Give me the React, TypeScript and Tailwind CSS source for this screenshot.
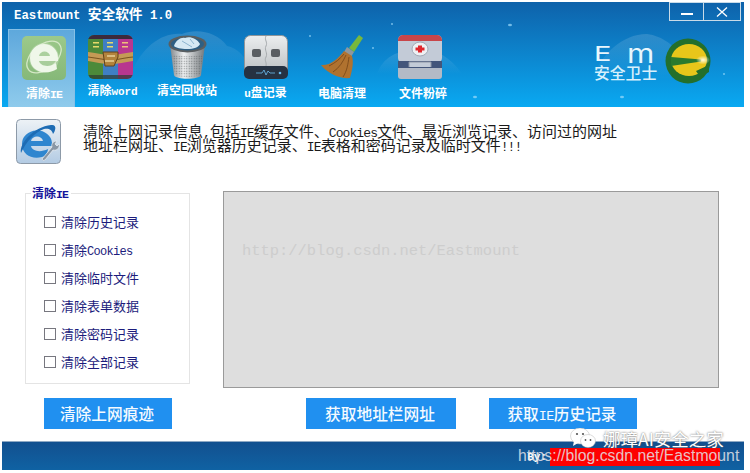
import type { ReactNode } from "react";

// half-width latin runs, the CJK font sets the full-width size around them
function L({ children, className }: { children: ReactNode; className: string }) {
  return <span className={`font-['Liberation_Mono',monospace] leading-[0] ${className}`}>{children}</span>;
}

function IeGreenIcon() {
  return (
    <svg width="44" height="44" viewBox="0 0 44 44">
      <defs>
        <linearGradient id="ieGreen" x1="0" y1="0" x2="0" y2="1">
          <stop offset="0" stopColor="#9cc98a" />
          <stop offset="1" stopColor="#86b878" />
        </linearGradient>
      </defs>
      <rect width="44" height="44" rx="5" fill="url(#ieGreen)" />
      <ellipse cx="22" cy="21" rx="20" ry="12" fill="none" stroke="#d4e8c6" strokeWidth="1.300" transform="rotate(-40 22 21)" />
      <circle cx="22" cy="22" r="15" fill="#d9ecd0" opacity="0.35" />
      <path
        d="M8 22a14 14 0 0 1 28 0v3H17c1 5 10 7 17 2l1 6c-11 7-27 3-27-11zm9-2h11c-1-6-10-6-11 0z"
        fill="#eff7e9"
      />
    </svg>
  );
}

function RarIcon() {
  return (
    <svg width="45" height="44" viewBox="0 0 45 44">
      <clipPath id="rarClip">
        <rect width="45" height="44" rx="6" />
      </clipPath>
      <g clipPath="url(#rarClip)">
        <rect x="0" width="15" height="44" fill="#4c8a3a" />
        <rect x="15" width="15" height="44" fill="#3f7fc4" />
        <rect x="30" width="15" height="44" fill="#b8368f" />
        <rect width="45" height="4" fill="#3c2a3c" />
        <rect y="40" width="45" height="4" fill="#2c3a30" opacity="0.7" />
        <path d="M0 17c10 1 16 3 22 3s14-2 23-3v9c-8 1-15 3-23 3S8 27 0 26z" fill="#c49a55" />
        <path d="M0 22c10 1 16 3 22 3s14-2 23-3" fill="none" stroke="#7a5522" strokeWidth="1.200" />
        <path d="M15 17h15v5l-4 9H17z" fill="#b2833c" stroke="#63431a" strokeWidth="1" />
        <path d="M19 21h8M17 26h9" stroke="#e8cf95" strokeWidth="1.500" />
      </g>
      <rect x="5" y="7" width="6" height="1.500" fill="#e8da6a" />
      <rect x="5" y="11" width="6" height="1.500" fill="#e8da6a" />
      <rect x="19" y="7" width="6" height="1.500" fill="#e8da6a" />
      <rect x="19" y="11" width="6" height="1.500" fill="#e8da6a" />
      <rect x="34" y="7" width="6" height="1.500" fill="#eec07a" />
      <rect x="34" y="11" width="6" height="1.500" fill="#eec07a" />
    </svg>
  );
}

function BinIcon() {
  return (
    <svg width="39" height="44" viewBox="0 0 39 44">
      <defs>
        <linearGradient id="binSide" x1="0" y1="0" x2="1" y2="0">
          <stop offset="0" stopColor="#83888c" />
          <stop offset="0.4" stopColor="#eef0f1" />
          <stop offset="1" stopColor="#72777b" />
        </linearGradient>
        <pattern id="binMesh" width="2.500" height="2.500" patternUnits="userSpaceOnUse">
          <circle cx="1.250" cy="1.250" r="0.650" fill="#4e5356" />
        </pattern>
      </defs>
      <path d="M2 9l4 31c1 5 26 5 27 0l4-31z" fill="url(#binSide)" />
      <path d="M4 19l3 20c1 4 24 4 25 0l3-20c-8 3-23 3-31 0z" fill="url(#binMesh)" opacity="0.65" />
      <ellipse cx="19.500" cy="9" rx="19" ry="8.500" fill="#595e61" />
      <ellipse cx="19.500" cy="9" rx="16.500" ry="6.500" fill="#2e5f83" />
      <path d="M6 11c2-6 7-9 11-8 4-2 12 0 15 6-1 3-6 5-13 5-6 0-11-1-13-3z" fill="#d5e9f4" />
      <path d="M14 6l10 6M22 4l4 5" stroke="#8cb5d0" strokeWidth="1" />
    </svg>
  );
}

function UsbIcon() {
  return (
    <svg width="44" height="44" viewBox="0 0 44 44">
      <defs>
        <linearGradient id="usbBody" x1="0" y1="0" x2="0" y2="1">
          <stop offset="0" stopColor="#eceeef" />
          <stop offset="1" stopColor="#b9bdc0" />
        </linearGradient>
      </defs>
      <rect x="0.500" y="0.500" width="43" height="40" rx="6" fill="url(#usbBody)" stroke="#8f9599" strokeWidth="1" />
      <path d="M22 1c-2 4 2 6 0 10s2 7 0 11 1 5 0 9" fill="none" stroke="#a6aaad" />
      <rect x="8" y="14" width="9" height="8" rx="2" fill="#5a5e62" />
      <rect x="27" y="14" width="9" height="8" rx="2" fill="#5a5e62" />
      <rect y="31" width="44" height="13" rx="5" fill="#263242" />
      <path d="M12 38h6l2-3 2 5 2-4 2 2h5" fill="none" stroke="#6bbcf0" strokeWidth="0.800" />
      <circle cx="36" cy="38" r="1.300" fill="#6bbcf0" />
    </svg>
  );
}

function BroomIcon() {
  return (
    <svg width="43" height="44" viewBox="0 0 43 44">
      <path d="M28 13L38 0l4 3-9 14z" fill="#78b83c" />
      <path d="M26 12l7 5-3 5-7-5z" fill="#8f979c" />
      <path d="M23 16l8 5c2 6 0 15-2 22-9 1-22-4-29-13 9 1 17-6 23-14z" fill="#b0722f" />
      <path d="M28 22c-1 7-2 14-6 20M25 20c-3 7-7 13-13 17M23 19c-4 5-9 9-15 12" fill="none" stroke="#7c491a" strokeWidth="0.900" />
    </svg>
  );
}

function KitIcon() {
  return (
    <svg width="44" height="44" viewBox="0 0 44 44">
      <rect width="44" height="28" rx="5" fill="#c3cbd7" />
      <path d="M0 5a5 5 0 0 1 5-5h34a5 5 0 0 1 5 5v1H0z" fill="#c8464a" />
      <rect y="30" width="44" height="14" rx="3" fill="#b3bac6" />
      <rect y="26" width="44" height="7" fill="#43557a" />
      <path d="M11 32v-5h22v5" fill="#c3cbd7" stroke="#8f97a6" />
      <ellipse cx="22" cy="14" rx="8" ry="7" fill="#eef0f3" stroke="#a1a9b6" />
      <path d="M20 10.500h4v2h2.500v3H24v2h-4v-2h-2.500v-3H20z" fill="#e0262c" />
    </svg>
  );
}

function IeBlueIcon() {
  return (
    <svg width="45" height="45" viewBox="0 0 45 45">
      <defs>
        <linearGradient id="ieTile" x1="0" y1="0" x2="0" y2="1">
          <stop offset="0" stopColor="#edf2f6" />
          <stop offset="1" stopColor="#b3cbe3" />
        </linearGradient>
      </defs>
      <rect x="0.500" y="0.500" width="44" height="44" rx="4" fill="url(#ieTile)" stroke="#8d9aa8" />
      <path
        d="M6 25a15 13 0 0 1 30-1v3H15c1 5 9 7 17 3l-1 6c-11 6-25 2-25-11zm9-3h12c-1-6-11-6-12 0z"
        fill="#2f86cf"
      />
      <path d="M5 34C3 24 18 8 35 6c6-1 5 5 2 9-1-5-5-6-9-5C19 13 10 23 5 34z" fill="#1d6cb4" />
      <path d="M26 40l10-12c-1-3 1-6 5-6l-2 3 2 2 2-2c1 4-2 7-6 6l-8 10a2 2 0 0 1-3-1z" fill="#8a97a5" stroke="#eef2f5" strokeWidth="0.700" />
    </svg>
  );
}

function HeaderBackdrop() {
  return (
    <svg className="absolute inset-0 pointer-events-none" width="742" height="105" viewBox="0 0 742 105">
      <defs>
        <linearGradient id="cloudFade" x1="0" y1="0" x2="0" y2="1">
          <stop offset="0" stopColor="#ffffff" stopOpacity="0.14" />
          <stop offset="1" stopColor="#ffffff" stopOpacity="0" />
        </linearGradient>
      </defs>
      <g fill="url(#cloudFade)">
        <path d="M130 70c10-25 30-40 50-38 15-6 35-2 45 12 10 2 20 10 22 26z" />
        <path d="M375 72c5-15 20-25 35-22 15-6 35 0 50 22z" />
        <path d="M590 78c8-25 30-46 55-46 15 2 30 12 35 26l16 20z" />
      </g>
      <g fill="#9fdcfb" opacity="0.7">
        <circle cx="308" cy="34" r="1" />
        <circle cx="332" cy="62" r="1" />
        <ellipse cx="508" cy="23" rx="2" ry="1.200" />
        <ellipse cx="473" cy="95" rx="2" ry="1.200" />
        <circle cx="371" cy="46" r="1" />
        <ellipse cx="620" cy="95" rx="2" ry="1.200" />
        <circle cx="722" cy="72" r="1" />
        <circle cx="390" cy="22" r="1" />
      </g>
    </svg>
  );
}

function Tab({
  icon,
  label,
  width,
  labelClass,
  iconClass = "",
  active = false,
}: {
  icon: ReactNode;
  label: ReactNode;
  width: string;
  labelClass: string;
  iconClass?: string;
  active?: boolean;
}) {
  return (
    <div
      className={`${width} h-[78px] flex flex-col items-center pt-[6px] ${
        active ? "bg-gradient-to-b from-[#5ea8dc] to-[#8fcbec] border border-[#86c0e6] border-b-0 pl-[5px]" : ""
      }`}
    >
      <div className={`h-[44px] flex items-center ${iconClass}`}>{icon}</div>
      <span
        className={`text-[12px] leading-[14px] font-bold text-white whitespace-nowrap font-['Noto_Sans_CJK_SC',sans-serif] ${labelClass}`}
      >
        {label}
      </span>
    </div>
  );
}

function Option({ label, latin }: { label: string; latin?: string }) {
  return (
    <label className="flex items-center h-[28px]">
      <span className="w-[12px] h-[12px] border border-[#77777f] bg-white shrink-0" />
      <span className="ml-[5px] text-[13px] leading-[16px] text-[#1c1c7c] whitespace-nowrap font-['Noto_Sans_CJK_SC',sans-serif]">
        {label}
        {latin && <L className="text-[12px] tracking-[-0.700px]">{latin}</L>}
      </span>
    </label>
  );
}

function BlueButton({ children, className }: { children: ReactNode; className: string }) {
  return (
    <button
      type="button"
      className={`h-[31px] pt-px pr-[2px] bg-[#2090f0] text-[#f4faff] text-[15.700px] font-medium whitespace-nowrap font-['Noto_Sans_CJK_SC',sans-serif] ${className}`}
    >
      {children}
    </button>
  );
}

export default function App() {
  return (
    <div className="relative w-[750px] h-[473px] bg-white overflow-hidden pt-[2px] pl-[2px]">
      <div className="w-[742px] h-[468px] flex flex-col">
        {/* header */}
        <header className="relative h-[105px] shrink-0 bg-gradient-to-b from-[#0e62aa] to-[#09a9f2]">
          <HeaderBackdrop />
          <div className="relative flex items-start justify-between h-[27px] pl-[12px] pr-[3px]">
            <span className="mt-[2px] text-[13.700px] leading-[18px] font-bold text-white whitespace-nowrap font-['Noto_Sans_CJK_SC',sans-serif]">
              <L className="text-[12.300px]">Eastmount </L>安全软件<L className="text-[12.300px]"> 1.0</L>
            </span>
            <div className="flex h-[19px] border border-[#c9dbe8]">
              <div className="w-[34px] flex items-center justify-center border-r border-[#c9dbe8]">
                <span className="w-[12px] h-[2px] mt-[4px] bg-white" />
              </div>
              <div className="w-[36px] flex items-center justify-center">
                <svg width="12" height="10" viewBox="0 0 12 10">
                  <path d="M1 0.500l10 9M11 0.500l-10 9" stroke="#ffffff" strokeWidth="1.300" />
                </svg>
              </div>
            </div>
          </div>
          <div className="relative flex pl-[6px]">
            <Tab
              active
              width="w-[67px]"
              icon={<IeGreenIcon />}
              label={
                <>
                  清除<L className="text-[11.500px] tracking-[-0.900px]">IE</L>
                </>
              }
              labelClass="mt-[6px] text-[#eef7fc]"
            />
            <Tab
              width="w-[72px]"
              icon={<RarIcon />}
              label={
                <>
                  清除<L className="text-[11px] tracking-[-0.100px]">word</L>
                </>
              }
              iconClass="mr-[1px]"
              labelClass="mt-[4px] ml-[3px]"
            />
            <Tab width="w-[80px]" icon={<BinIcon />} label="清空回收站" labelClass="mt-[4px]" />
            <Tab
              width="w-[77px]"
              icon={<UsbIcon />}
              label={
                <>
                  <L className="text-[11px]">u</L>盘记录
                </>
              }
              labelClass="mt-[6px]"
            />
            <Tab width="w-[76px]" icon={<BroomIcon />} label="电脑清理" labelClass="mt-[7px]" />
            <Tab width="w-[86px]" icon={<KitIcon />} label="文件粉碎" iconClass="mr-[6px]" labelClass="mt-[7px]" />
            <div className="ml-[128px] mt-[11px] flex items-start">
              <div className="flex flex-col w-[64px]">
                <div className="flex items-end h-[20px] mt-[2px] font-['Inter',sans-serif] font-normal text-[#e8f6fd]">
                  <span className="text-[20px] leading-[16px] scale-x-[1.450] origin-left">E</span>
                  <span className="ml-[21px] text-[26px] leading-[16px] scale-x-[1.200] origin-left">m</span>
                </div>
                <span className="mt-[3px] font-['Noto_Sans_CJK_SC',sans-serif] font-medium text-[15.800px] leading-[16px] text-[#d8f0fc] whitespace-nowrap">
                  安全卫士
                </span>
              </div>
              <svg className="ml-[7px] -mt-[2px]" width="46" height="46" viewBox="0 0 46 46">
                <defs>
                  <radialGradient id="logoGlow">
                    <stop offset="0" stopColor="#fffbe0" />
                    <stop offset="1" stopColor="#fffbe0" stopOpacity="0" />
                  </radialGradient>
                </defs>
                <circle cx="23" cy="23" r="22.500" fill="#236f2c" />
                <ellipse cx="24" cy="22" rx="18" ry="16" fill="#e8c61a" />
                <path d="M6 19l30 2.500v2L6 28z" fill="#2a7a2e" />
                <path d="M31 33l13-6v7l-9 5z" fill="#236f2c" />
                <ellipse cx="38" cy="22" rx="7" ry="4.500" fill="url(#logoGlow)" />
              </svg>
            </div>
          </div>
        </header>

        {/* intro */}
        <div className="flex items-start pl-[14px] pt-[12px] h-[84px] shrink-0">
          <IeBlueIcon />
          <p className="ml-[22px] mt-[5px] text-[15px] leading-[14px] text-[#1a1a1a] whitespace-nowrap font-['Noto_Sans_CJK_SC',sans-serif]">
            清除上网记录信息<L className="text-[13px] tracking-[-0.900px]">,</L>包括
            <L className="text-[13px] tracking-[-0.900px]">IE</L>缓存文件、
            <L className="text-[13px] tracking-[-0.900px]">Cookies</L>文件、最近浏览记录、访问过的网址
            <br />
            地址栏网址、<L className="text-[13px] tracking-[-0.900px]">IE</L>浏览器历史记录、
            <L className="text-[13px] tracking-[-0.900px]">IE</L>
            表格和密码记录及临时文件<L className="text-[13px] tracking-[-0.900px]">!!!</L>
          </p>
        </div>

        {/* main */}
        <div className="flex items-start pl-[23px] h-[200px] shrink-0">
          <fieldset className="w-[165px] h-[197px] -mt-[4px] border border-[#e4e4e4] pl-[18px]">
            <legend className="-ml-[13px] pl-px pr-[3px] text-[12px] leading-[12px] font-bold text-[#14149a] whitespace-nowrap font-['Noto_Sans_CJK_SC',sans-serif]">
              清除<L className="text-[11.500px] tracking-[-0.900px]">IE</L>
            </legend>
            <div className="mt-[9px]">
              <Option label="清除历史记录" />
              <Option label="清除" latin="Cookies" />
              <Option label="清除临时文件" />
              <Option label="清除表单数据" />
              <Option label="清除密码记录" />
              <Option label="清除全部记录" />
            </div>
          </fieldset>
          <div className="ml-[33px] w-[496px] h-[197px] bg-[#dedede] border border-[#9a9a9a] pl-[18px] pt-[45px]">
            <span className="font-['Liberation_Mono',monospace] text-[15.450px] leading-[20px] text-[#cdcdcd] whitespace-nowrap">
              http://blog.csdn.net/Eastmount
            </span>
          </div>
        </div>

        {/* buttons */}
        <div className="flex pl-[42px] mt-[7px] shrink-0">
          <BlueButton className="w-[128px]">清除上网痕迹</BlueButton>
          <BlueButton className="ml-[134px] w-[150px]">获取地址栏网址</BlueButton>
          <BlueButton className="ml-[33px] w-[148px]">
            获取<L className="text-[13.500px] tracking-[-0.600px]">IE</L>历史记录
          </BlueButton>
        </div>

        {/* footer */}
        <footer className="mt-[12px] h-[29px] shrink-0 bg-gradient-to-b from-[#12508f] to-[#0f62a3] border-t border-[#8fa9c4] flex items-start justify-end pr-[24px] pt-[6px]">
          <span className="mr-[3px] mt-[3px] text-[11px] leading-[12px] font-bold text-white font-['Liberation_Mono',monospace]">
            By:
          </span>
          <div className="w-[170px] h-[18px] bg-[#fe0000]" />
        </footer>
      </div>

      {/* watermark over the footer */}
      <div className="absolute left-[518px] top-[428px] w-[226px]">
        <div className="flex items-center pl-[52px]">
          <svg width="26" height="21" viewBox="0 0 26 21">
            <ellipse cx="10" cy="8" rx="9.500" ry="8" fill="#ffffff" stroke="#b8b8b8" strokeWidth="0.500" />
            <path d="M4 13l-1 5 5-3z" fill="#ffffff" />
            <ellipse cx="18" cy="13" rx="7.500" ry="6.500" fill="#ffffff" stroke="#b8b8b8" strokeWidth="0.500" />
            <circle cx="7" cy="6" r="1.100" fill="#555555" />
            <circle cx="13" cy="6" r="1.100" fill="#555555" />
            <circle cx="15.500" cy="12" r="0.900" fill="#555555" />
            <circle cx="20.500" cy="12" r="0.900" fill="#555555" />
          </svg>
          <span className="ml-[7px] font-['Noto_Sans_CJK_SC',sans-serif] text-[17.500px] leading-[18px] text-white [text-shadow:0_0_2px_#555555] whitespace-nowrap">
            娜璋AI安全之家
          </span>
        </div>
        <div className="-mt-[2px] font-['Liberation_Sans',sans-serif] text-[15.800px] leading-[18px] text-[#e4e4ea]/85 whitespace-nowrap">
          https://blog.csdn.net/Eastmount
        </div>
      </div>
    </div>
  );
}
